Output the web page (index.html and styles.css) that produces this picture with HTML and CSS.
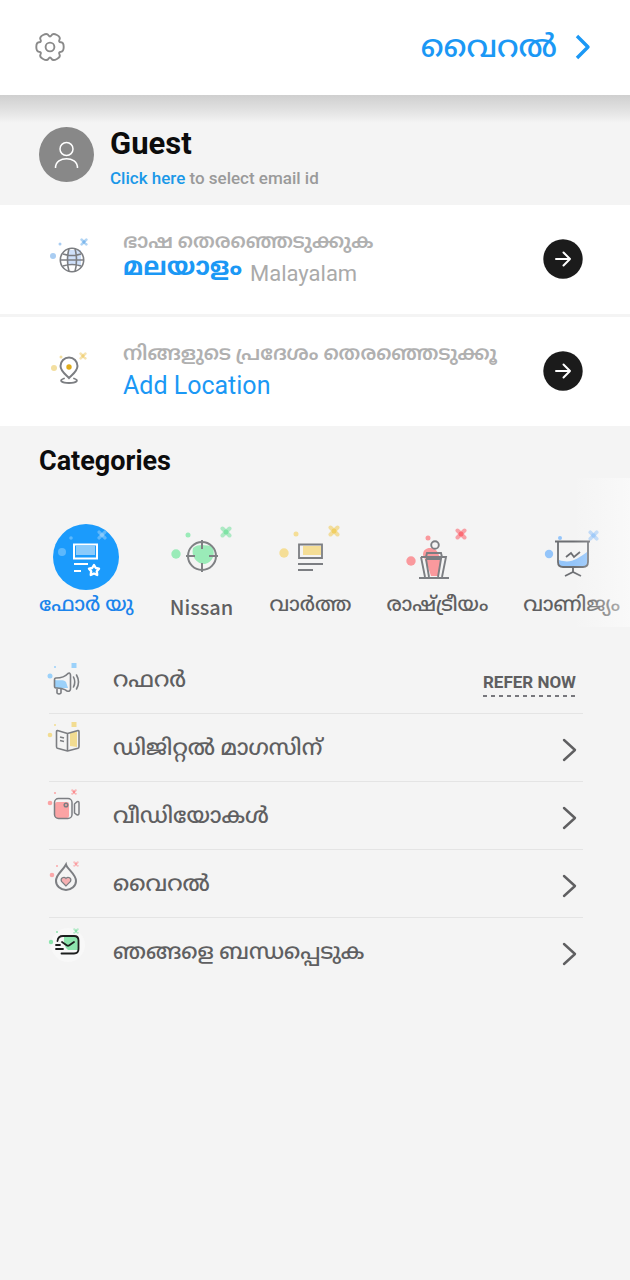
FILE: index.html
```html
<!DOCTYPE html>
<html lang="ml">
<head>
    <meta charset="UTF-8">
    <meta name="viewport" content="width=device-width, initial-scale=1.0">
    <title>Menu</title>
    <link rel="stylesheet" href="styles.css">
</head>
<body>

<svg class="symbols" aria-hidden="true">
    <symbol id="cross" viewBox="0 0 12 12">
        <path d="M2.5 2.5L9.5 9.5M9.5 2.5L2.5 9.5" stroke="currentColor" stroke-width="4" stroke-linecap="round" opacity="0.6"/>
        <circle cx="6" cy="6" r="2.5" fill="currentColor"/>
    </symbol>
    <symbol id="chevron" viewBox="0 0 16 26">
        <path d="M2 3L13 13L2 23" fill="none" stroke="currentColor" stroke-width="2.4" stroke-linecap="round" stroke-linejoin="round"/>
    </symbol>
    <symbol id="arrow" viewBox="0 0 40 40">
        <circle cx="20" cy="20" r="19.7" fill="#1b1b1b"/>
        <path d="M13 20H27M20.5 13.5L27 20L20.5 26.5" fill="none" stroke="#fff" stroke-width="2" stroke-linecap="round" stroke-linejoin="round"/>
    </symbol>
</svg>

<header class="topbar">
    <button class="settings" aria-label="Settings">
        <svg width="32" height="32" viewBox="0 0 32 32" fill="none" stroke="#8a8a8a" stroke-width="1.9" stroke-linejoin="round">
            <path d="M29.7 16Q29.7 20.4 27 20.7Q24.2 20.9 25.5 23.4Q26.8 25.9 22.9 28Q18.9 30.2 17.5 27.7Q16 25.2 14.5 27.7Q13.1 30.2 9.100 28Q5.2 25.9 6.500 23.4Q7.8 20.9 5 20.7Q2.3 20.4 2.3 16Q2.3 11.6 5 11.3Q7.8 11.1 6.5 8.6Q5.2 6.1 9.1 4Q13.1 1.8 14.5 4.3Q16 6.8 17.5 4.3Q18.9 1.8 22.9 4Q26.8 6.1 25.5 8.6Q24.2 11.1 27 11.3Q29.7 11.6 29.7 16Z"/>
            <circle cx="16" cy="16" r="4.4"/>
        </svg>
    </button>
    <a class="viral" href="#">
        <span>വൈറൽ</span>
        <svg width="16" height="26" viewBox="0 0 16 26"><path d="M2 2L13 13L2 24" fill="none" stroke="currentColor" stroke-width="3.4" stroke-linejoin="round"/></svg>
    </a>
</header>

<section class="profile">
    <svg width="55" height="55" viewBox="0 0 55 55" fill="none" stroke="#fff" stroke-width="1.5">
        <circle cx="27.5" cy="27.5" r="27.5" fill="#888" stroke="none"/>
        <circle cx="27.5" cy="22" r="6.5"/>
        <path d="M16.5 41C16.5 28.5 38.5 28.5 38.5 41"/>
    </svg>
    <div>
        <h1 class="name">Guest</h1>
        <p class="hint"><a href="#">Click here</a> to select email id</p>
    </div>
</section>

<section class="options">
    <a class="option" href="#">
        <svg width="44" height="44" viewBox="0 0 44 44" fill="none">
            <g color="#7db8ee" fill="#a9cdf2">
                <use href="#cross" x="32" y="1" width="8" height="8"/>
                <circle cx="12" cy="7" r="1.5"/>
                <circle cx="5" cy="19" r="3"/>
            </g>
            <path d="M20 13H33V28H20Z" fill="#cfe0fa"/>
            <g stroke="#7c7e82" stroke-width="1.6">
                <circle cx="24" cy="23" r="11.7"/>
                <path d="M15 17Q24 20 33 17M15 29Q24 26 33 29M12 23H36M21 11.5Q18 23 21 34.5M27 11.5Q30 23 27 34.5"/>
            </g>
        </svg>
        <span class="option-text">
            <span class="option-title">ഭാഷ തെരഞ്ഞെടുക്കുക</span>
            <span class="option-value"><b>മലയാളം</b> <small>Malayalam</small></span>
        </span>
        <svg width="40" height="40"><use href="#arrow"/></svg>
    </a>
    <a class="option" href="#">
        <svg width="44" height="44" viewBox="0 0 44 44" fill="none">
            <g color="#f1d27c" fill="#f3dfa0">
                <use href="#cross" x="31" y="3" width="8" height="8"/>
                <circle cx="13" cy="8" r="1.5"/>
                <circle cx="6" cy="19" r="3"/>
            </g>
            <path d="M21 29C17 25 12.5 22 12.5 17A8.5 8.5 0 0 1 29.5 17C29.5 22 25 25 21 29Z" stroke="#7c7e82" stroke-width="2"/>
            <circle cx="21" cy="18" r="2.7" fill="#e0ac1c"/>
            <path d="M16 29.5C10 31.5 14 34 21 34S32 31.5 26 29.5" stroke="#7c7e82" stroke-width="1.8" stroke-linecap="round"/>
        </svg>
        <span class="option-text">
            <span class="option-title">നിങ്ങളുടെ പ്രദേശം തെരഞ്ഞെടുക്കൂ</span>
            <span class="option-value">Add Location</span>
        </span>
        <svg width="40" height="40"><use href="#arrow"/></svg>
    </a>
</section>

<h2 class="heading">Categories</h2>

<nav class="categories">
    <a class="category active" href="#">
        <svg width="66" height="66" viewBox="0 0 66 66" fill="none">
            <circle cx="33" cy="33" r="33" fill="#1b9bfc"/>
            <g color="#8bcbfb" fill="#5cb8fc">
                <use href="#cross" x="44" y="6" width="10" height="10"/>
                <circle cx="18" cy="14" r="1.8"/>
                <circle cx="9" cy="28" r="4"/>
            </g>
            <rect x="23" y="22" width="19" height="9" fill="#8bcbfb"/>
            <g stroke="#fff" stroke-width="2">
                <rect x="21" y="20.5" width="23" height="14"/>
                <path d="M21 40H35M21 47H28"/>
                <path d="M41 41L42.8 44L46 44.7L43.8 47.2L44.2 51L41 49.5L37.8 51L38.2 47.2L36 44.7L39.2 44Z" stroke-width="2.4" stroke-linejoin="round"/>
            </g>
        </svg>
        <span>ഫോർ യു</span>
    </a>
    <a class="category" href="#">
        <svg width="66" height="66" viewBox="0 0 66 66" fill="none">
            <g color="#7fe3a5" fill="#9aebb8">
                <use href="#cross" x="51" y="2" width="12" height="12"/>
                <circle cx="19" cy="11" r="2.5"/>
                <circle cx="7" cy="30" r="4.7"/>
                <path d="M24 24C30 19 38 22 43 22C47 30 44 38 36 40C27 40 22 32 24 24Z"/>
            </g>
            <g stroke="#7f8184" stroke-width="2">
                <circle cx="33" cy="32" r="14"/>
                <path d="M33 16V25M33 39V48M17 32H26M40 32H49"/>
            </g>
        </svg>
        <span class="latin">Nissan</span>
    </a>
    <a class="category" href="#">
        <svg width="66" height="66" viewBox="0 0 66 66" fill="none">
            <g color="#f1cf62" fill="#f5de96">
                <use href="#cross" x="51" y="1" width="12" height="12"/>
                <circle cx="19" cy="10" r="2.5"/>
                <circle cx="7" cy="29" r="4.7"/>
                <rect x="26" y="22" width="18" height="9"/>
            </g>
            <path d="M22 20.5H45V34H22ZM21 40H46M21 46H36" stroke="#7c7e82" stroke-width="1.8"/>
        </svg>
        <span>വാർത്ത</span>
    </a>
    <a class="category" href="#">
        <svg width="66" height="66" viewBox="0 0 66 66" fill="none">
            <g color="#fc6b74" fill="#fa999d">
                <use href="#cross" x="51" y="4" width="12" height="12"/>
                <circle cx="24" cy="14" r="2.5"/>
                <circle cx="7" cy="37" r="4.7"/>
                <path d="M19 31C19 21 32 23 34 29L37 36L34 52H27L23 40Z"/>
            </g>
            <g stroke="#7c7e82" stroke-width="1.9">
                <circle cx="31" cy="21" r="3.8"/>
                <path d="M15 54H45M17 33H22L23 29H37L38 33H42L38 53M17 33L21 53M22 35H37L34 53M22 35L25 53M22 33H38"/>
            </g>
        </svg>
        <span>രാഷ്ട്രീയം</span>
    </a>
    <a class="category" href="#">
        <svg width="66" height="66" viewBox="0 0 66 66" fill="none">
            <g color="#88bdf8" fill="#94c5fa">
                <use href="#cross" x="49" y="6" width="11" height="11"/>
                <circle cx="21" cy="14" r="2"/>
                <circle cx="10" cy="30" r="4.2"/>
                <path d="M20 36C32 40 38 35 48 28V39Q48 43 44 43H24Q20 43 20 39Z"/>
            </g>
            <path d="M16 17.5H51M19 18V38Q19 43 24 43H44Q49 43 49 38V18M27 33L32 29L35 33L41 28M34 43V49M26 52L34 48L42 52" stroke="#6c6e72" stroke-width="1.8"/>
        </svg>
        <span>വാണിജ്യം</span>
    </a>
</nav>

<ul class="menu">
    <li>
        <svg class="menu-icon" width="40" height="60" viewBox="0 0 40 60" fill="none">
            <g fill="#9bd1fa">
                <rect x="26.5" y="13" width="5" height="5"/>
                <circle cx="10" cy="17" r="1"/>
                <circle cx="5" cy="26" r="2.5"/>
                <path d="M10 30C14 31 18 29 21 32L23 38H10Z"/>
            </g>
            <path d="M11 28C15 28 20 27 23 23.5Q25 22 25.5 25V39Q25 42 22 41C18 38 15 38 11 38Q9.5 38 9.5 36V30Q9.5 28 11 28ZM12 38V43Q14 45 16 43V38.5M28.5 27Q31 32 28.5 37M31.5 25Q35.5 32 31.5 39" stroke="#7c7e82" stroke-width="1.6" stroke-linejoin="round" stroke-linecap="round"/>
        </svg>
        <span class="menu-label">റഫറർ</span>
        <a class="refer" href="#">REFER NOW</a>
    </li>
    <li>
        <svg class="menu-icon" width="40" height="60" viewBox="0 0 40 60" fill="none">
            <g fill="#f2dc91">
                <rect x="26.5" y="4" width="5" height="5"/>
                <circle cx="10" cy="7" r="1"/>
                <circle cx="5" cy="17" r="2.3"/>
                <path d="M25 15L32 13V29L25 28Z"/>
            </g>
            <path d="M22.5 15.5L12.5 12.5Q11.5 12.3 11.5 14V28.5Q11.5 30 12.5 30.3L22.5 33L33 30.3Q34 30 34 28.5V14Q34 12.3 33 12.5L22.5 15.5V33M15 19L19 20M15 22.5L19 23.5" stroke="#7c7e82" stroke-width="1.6" stroke-linejoin="round"/>
        </svg>
        <a class="menu-label" href="#">ഡിജിറ്റൽ മാഗസിന്</a>
        <svg class="go" width="16" height="26"><use href="#chevron"/></svg>
    </li>
    <li>
        <svg class="menu-icon" width="40" height="60" viewBox="0 0 40 60" fill="none">
            <g color="#fb8d90" fill="#fba3a4">
                <use href="#cross" x="26" y="3" width="6" height="6"/>
                <circle cx="10" cy="7" r="1"/>
                <circle cx="5" cy="17" r="2.3"/>
                <rect x="10" y="16" width="14" height="16" rx="2"/>
            </g>
            <g stroke="#7c7e82" stroke-width="1.5" stroke-linejoin="round">
                <rect x="9.5" y="12.5" width="17.5" height="20" rx="4"/>
                <circle cx="21" cy="19" r="1.8"/>
                <path d="M29.5 18L32 15.8Q34 15 34 17V27Q34 29.5 32 28.8L29.5 27Z"/>
            </g>
        </svg>
        <a class="menu-label" href="#">വീഡിയോകൾ</a>
        <svg class="go" width="16" height="26"><use href="#chevron"/></svg>
    </li>
    <li>
        <svg class="menu-icon" width="40" height="60" viewBox="0 0 40 60" fill="none">
            <g color="#fb9ea2" fill="#fba8aa">
                <use href="#cross" x="28" y="7" width="6" height="6"/>
                <circle cx="12" cy="12" r="1"/>
                <circle cx="7" cy="21" r="2.3"/>
            </g>
            <path d="M21 10.5C22 15 31 20 31 27A10 9 0 0 1 11 27C11 20 17 18 21 10.5Z" stroke="#7c7e82" stroke-width="2"/>
            <path d="M21 32L16.5 27.5C15 24 19 22 21 24.5C23 22 27 24 25.5 27.5Z" fill="#f5b0b2" stroke="#7c7e82" stroke-width="1.2"/>
        </svg>
        <a class="menu-label" href="#">വൈറൽ</a>
        <svg class="go" width="16" height="26"><use href="#chevron"/></svg>
    </li>
    <li>
        <svg class="menu-icon" width="40" height="60" viewBox="0 0 40 60" fill="none">
            <circle cx="23" cy="23" r="17" fill="#f8f8f8"/>
            <g color="#8de5ae" fill="#8de5ae">
                <use href="#cross" x="28" y="6" width="6" height="6"/>
                <circle cx="12" cy="10" r="1"/>
                <circle cx="6" cy="20" r="2.2"/>
                <path d="M19 15H33V28H23Q18 24 19 15Z"/>
            </g>
            <path d="M12.5 19Q13 14 18 14H29Q33.5 14 33.5 18.5V27Q33.5 31.5 29 31.5H16.5M17 20L22 23.5Q23 24 24 23.5L29 20M11 23H15M11 27H18" stroke="#1d1f1e" stroke-width="1.8" stroke-linecap="round"/>
        </svg>
        <a class="menu-label" href="#">ഞങ്ങളെ ബന്ധപ്പെടുക</a>
        <svg class="go" width="16" height="26"><use href="#chevron"/></svg>
    </li>
</ul>

</body>
</html>
```
FILE: styles.css
```css
body {
    font-family: Roboto, "Noto Sans Malayalam", "Noto Sans", sans-serif;
    background-color: #f4f4f4;
    color: #5f5f61;
    margin: 0;
    overflow-x: hidden;
}
a {
    color: inherit;
    text-decoration: none;
}
svg {
    display: block;
    flex: none;
}
.symbols {
    width: 0;
    height: 0;
    position: absolute;
}
.topbar {
    display: flex;
    justify-content: space-between;
    align-items: center;
    height: 93px;
    padding: 0 39px 2px 34px;
    background-color: #fff;
}
.settings {
    padding: 0;
    border: none;
    background: none;
    cursor: pointer;
}
.viral {
    display: flex;
    align-items: center;
    gap: 18px;
    color: #1b98f5;
    font-size: 31px;
    font-weight: 500;
    line-height: 40px;
}
.profile {
    display: flex;
    gap: 16px;
    padding: 32px 39px 16px;
    background: linear-gradient(#cfcfcf, #e0e0e0 14px, #f4f4f4 28px);
}
.name {
    margin: 0;
    font-size: 31px;
    font-weight: bold;
    line-height: 34px;
    color: #0c0c0c;
}
.hint {
    margin: 6px 0 0;
    font-size: 17px;
    font-weight: 500;
    line-height: 22px;
    color: #9a9a9a;
}
.hint a {
    color: #1b98e8;
}
.options {
    display: grid;
    gap: 3px;
}
.option {
    display: flex;
    align-items: center;
    height: 107px;
    padding: 0 47px 2px 48px;
    background-color: #fff;
}
.option-text {
    flex: 1;
    margin: 2px 0 0 31px;
    white-space: nowrap;
}
.option-title {
    display: block;
    font-size: 20px;
    font-weight: 600;
    line-height: 28px;
    color: #b0b0b0;
}
.option-value {
    display: flex;
    gap: 8px;
    font-size: 25px;
    line-height: 38px;
    color: #1b98f5;
}
.option-value b {
    line-height: 24px;
}
.option-value small {
    font-size: 22px;
    color: #aaa;
}
.heading {
    margin: 0;
    padding: 18px 39px 0;
    font-size: 27px;
    font-weight: bold;
    line-height: 34px;
    color: #0c0c0c;
}
.categories {
    position: relative;
    display: flex;
    gap: 35px;
    height: 103px;
    padding: 46px 0 0 39px;
    overflow: hidden;
}
.categories::after {
    content: "";
    position: absolute;
    top: 0;
    right: 0;
    width: 57px;
    height: 100%;
    background: linear-gradient(to right, rgba(252, 252, 252, 0), rgba(252, 252, 252, 0.6));
}
.category {
    display: flex;
    flex-direction: column;
    align-items: center;
    font-size: 20px;
    font-weight: 500;
    line-height: 28px;
    white-space: nowrap;
}
.category.active {
    color: #1b84ec;
}
.category .latin {
    font-family: "Noto Sans CJK SC", sans-serif;
    line-height: 34px;
}
.menu {
    margin: 0;
    padding: 19px 47px 0 49px;
    list-style: none;
}
.menu li {
    display: flex;
    align-items: center;
    height: 67px;
    border-bottom: 1px solid #e4e4e4;
}
.menu li:last-child {
    border-bottom: none;
}
.menu-icon {
    margin: 0 28px 0 -4px;
}
.menu-label {
    flex: 1;
    font-size: 22px;
    font-weight: 500;
    line-height: 32px;
}
.refer {
    margin: 6px 7px 0 0;
    padding-bottom: 2px;
    background: repeating-linear-gradient(to right, #77777c 0 4px, transparent 4px 8px) bottom / 100% 2px no-repeat;
    font-size: 17px;
    font-weight: bold;
    line-height: 26px;
}
.go {
    margin: 4px 5px 0 0;
}
```
